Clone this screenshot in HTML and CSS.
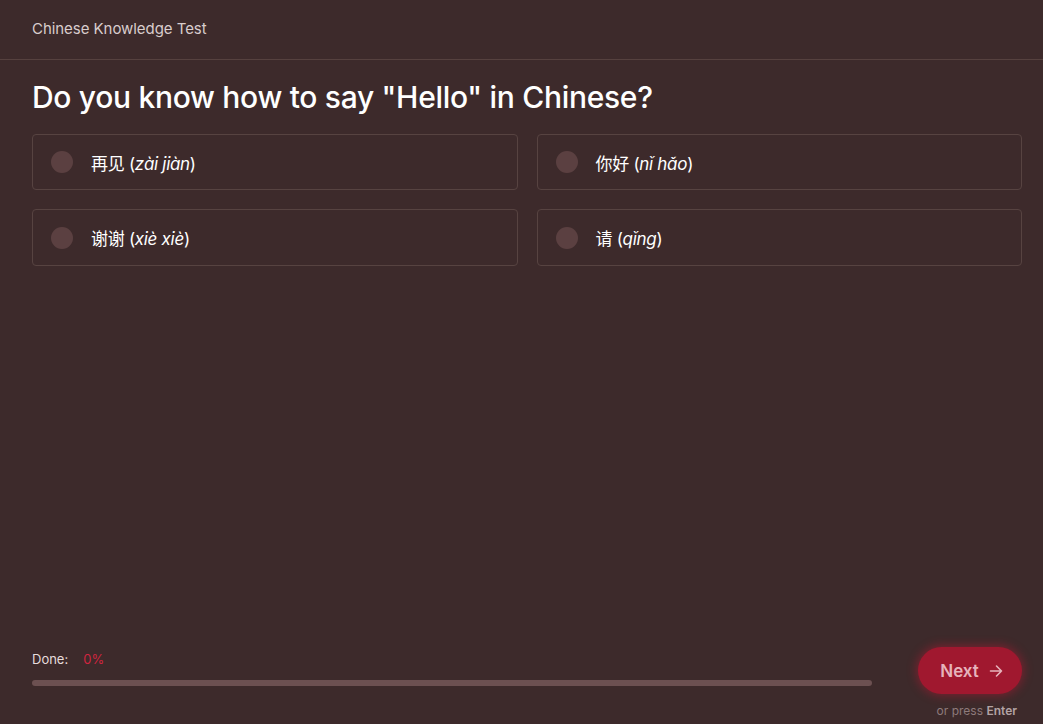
FILE: index.html
```html
<!DOCTYPE html>
<html lang="en">
<head>
<meta charset="utf-8">
<title>Chinese Knowledge Test</title>
<link rel="stylesheet" href="styles.css">
</head>
<body>
<div class="app">
  <header class="topbar">
    <span class="topbar-title">Chinese Knowledge Test</span>
  </header>
  <main class="content">
    <h1 class="question">Do you know how to say "Hello" in Chinese?</h1>
    <div class="options">
      <label class="option"><span class="radio"></span><span class="option-text">再见 (<i>zài jiàn</i>)</span></label>
      <label class="option"><span class="radio"></span><span class="option-text">你好 (<i>nǐ hǎo</i>)</span></label>
      <label class="option"><span class="radio"></span><span class="option-text">谢谢 (<i>xiè xiè</i>)</span></label>
      <label class="option"><span class="radio"></span><span class="option-text">请 (<i>qǐng</i>)</span></label>
    </div>
  </main>
  <footer class="footer">
    <div class="progress-area">
      <div class="progress-label"><span class="done">Done:</span><span class="percent">0%</span></div>
      <div class="progress-track"></div>
    </div>
    <div class="next-area">
      <button class="next-btn">Next
        <svg class="arrow" width="16" height="16" viewBox="0 0 16 16" fill="none" stroke="currentColor" stroke-width="1.6" stroke-linecap="round" stroke-linejoin="round"><path d="M2.5 8h11M8.5 3l5 5-5 5"/></svg>
      </button>
      <div class="hint">or press <b>Enter</b></div>
    </div>
  </footer>
</div>
</body>
</html>
```
FILE: styles.css
```css
* { box-sizing: border-box; }
html, body { margin: 0; padding: 0; }
body {
  background: #3d2a2b;
  font-family: Inter, "Noto Sans CJK SC", sans-serif;
  color: #f4eeee;
}
.app {
  height: 100vh;
  display: flex;
  flex-direction: column;
}
.topbar {
  height: 60px;
  border-bottom: 1px solid #56413f;
  display: flex;
  align-items: center;
  padding: 0 32px 2px;
}
.topbar-title {
  font-size: 15px;
  color: #d9cdcd;
  letter-spacing: -0.05px;
}
.content {
  flex: 1;
  padding: 0 21px 0 32px;
}
.question {
  margin: 17px 0 0;
  font-size: 30px;
  line-height: 40px;
  font-weight: 500;
  letter-spacing: -0.3px;
  color: #ffffff;
}
.options {
  margin-top: 17px;
  display: grid;
  grid-template-columns: 1fr 1fr;
  column-gap: 19px;
  row-gap: 19px;
}
.option {
  height: 56px;
  border: 1px solid #574341;
  border-radius: 4px;
  display: flex;
  align-items: center;
  padding-left: 18px;
}
.options .option:nth-child(n+3) { height: 57px; }
.radio {
  width: 22px;
  height: 22px;
  border-radius: 50%;
  background: #5b4041;
  flex: none;
}
.option-text {
  margin-left: 18px;
  font-size: 17px;
  color: #ffffff;
  letter-spacing: -0.3px;
}
.option-text i { font-style: italic; }
.footer {
  display: flex;
  align-items: flex-start;
  padding: 0 21px 6px 32px;
}
.progress-area {
  flex: 1;
  padding-top: 4px;
  margin-right: 46px;
}
.progress-label {
  font-size: 13px;
  display: flex;
  gap: 15px;
}
.done { color: #e6dcdc; }
.percent { color: #d0253f; }
.progress-track {
  margin-top: 13px;
  height: 6px;
  border-radius: 3px;
  background: #6c5051;
}
.next-area {
  display: flex;
  flex-direction: column;
  align-items: flex-end;
}
.next-btn {
  width: 104px;
  height: 47px;
  border: none;
  border-radius: 24px;
  background: #a0182f;
  color: #e6b3bb;
  font-family: inherit;
  font-size: 17px;
  font-weight: 600;
  display: flex;
  align-items: center;
  justify-content: center;
  gap: 9px;
  box-shadow: 0 0 10px 2px rgba(190, 25, 50, 0.45);
  padding: 0 0 0 4px;
}
.arrow { display: block; }
.hint {
  margin-top: 9px;
  margin-right: 5px;
  font-size: 12px;
  color: #8e7a7b;
}
.hint b { color: #b3a3a4; font-weight: 600; }
```
